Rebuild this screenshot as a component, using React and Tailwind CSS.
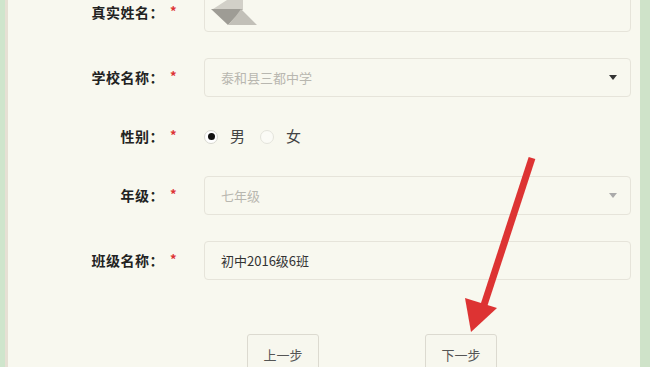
import React from 'react';

const font = { fontFamily: '"Noto Sans CJK SC", "Noto Sans", sans-serif' };

const Label = ({ text }) => (
  <div className="flex w-[204px] shrink-0 items-center">
    <span className="w-[164px] text-right text-[14px] font-bold tracking-[0.5px] text-[#222]">{text}</span>
    <span className="ml-[6px] -mt-[5px] text-[13px] font-bold leading-none text-[#d33]">*</span>
  </div>
);

const Caret = ({ color }) => (
  <svg width="8" height="5" viewBox="0 0 8 5" className="mr-[13px]">
    <polygon points="0,0 8,0 4,5" fill={color} />
  </svg>
);

const Field = ({ children, className = '' }) => (
  <div className={`flex h-[39px] w-[427px] items-center justify-between rounded-[4px] border border-[#e6e4da] bg-[#f8f8ef] pl-[16px] text-[13px] ${className}`}>
    {children}
  </div>
);

export default function App() {
  return (
    <div style={font} className="flex h-[367px] w-[650px] overflow-hidden bg-[#f8f8ef]">
      <div className="w-[5px] shrink-0 bg-[#cfe5cc]" />
      <div className="w-[3px] shrink-0 bg-[#e6e0d4]" />
      <div className="relative flex-1">
        <div className="-mt-[7px] flex flex-col gap-[26px]">
          <div className="-ml-[8px] flex h-[39px] items-center">
            <Label text="真实姓名：" />
            <div className="relative h-[39px] w-[427px] rounded-[4px] border border-[#e6e4da] bg-[#f8f8ef]">
              <svg width="60" height="39" viewBox="0 0 60 39" className="absolute left-[-2px] top-[0px]">
                <polygon points="10,15 24,6 40,6 40,15" fill="#d2d0c8" />
                <polygon points="8,15 40,15 25,31" fill="#9e9c95" />
                <polygon points="38,15 54,31 25,31 33,22" fill="#c2c0b8" />
              </svg>
            </div>
          </div>
          <div className="-ml-[8px] flex h-[39px] items-center">
            <Label text="学校名称：" />
            <Field>
              <span className="text-[#b8b7b0]">泰和县三都中学</span>
              <Caret color="#333" />
            </Field>
          </div>
          <div className="-ml-[8px] flex h-[27px] items-center">
            <Label text="性别：" />
            <div className="flex items-center text-[15px] text-[#444]">
              <span className="flex h-[14px] w-[14px] items-center justify-center rounded-full border border-[#d8d8d0] bg-white">
                <span className="h-[7px] w-[7px] rounded-full bg-[#111]" />
              </span>
              <span className="ml-[12px]">男</span>
              <span className="ml-[15px] h-[14px] w-[14px] rounded-full border border-[#e4e4dc] bg-[#fbfbf6]" />
              <span className="ml-[12px]">女</span>
            </div>
          </div>
          <div className="-ml-[8px] flex h-[39px] items-center">
            <Label text="年级：" />
            <Field>
              <span className="text-[#b8b7b0]">七年级</span>
              <Caret color="#aaa" />
            </Field>
          </div>
          <div className="-ml-[8px] flex h-[39px] items-center">
            <Label text="班级名称：" />
            <Field>
              <span className="text-[#333]">初中2016级6班</span>
            </Field>
          </div>
          <div className="-ml-[8px] mt-[28px] flex">
            <button className="ml-[247px] flex h-[40px] w-[72px] justify-center rounded-[3px] border border-[#dcdad0] bg-[#f7f7ee] pt-[10px] text-[13px] text-[#555]">上一步</button>
            <button className="ml-[106px] flex h-[40px] w-[72px] justify-center rounded-[3px] border border-[#dcdad0] bg-[#f7f7ee] pt-[10px] text-[13px] text-[#555]">下一步</button>
          </div>
        </div>
        <svg className="absolute left-[442px] top-[150px]" width="100" height="190" viewBox="0 0 100 190">
          <line x1="82" y1="8" x2="34" y2="155" stroke="#dd3333" strokeWidth="7" />
          <polygon points="15,148 47,158 21,182" fill="#dd3333" />
        </svg>
      </div>
      <div className="w-[10px] shrink-0 bg-[#cfe3c9]" />
    </div>
  );
}
